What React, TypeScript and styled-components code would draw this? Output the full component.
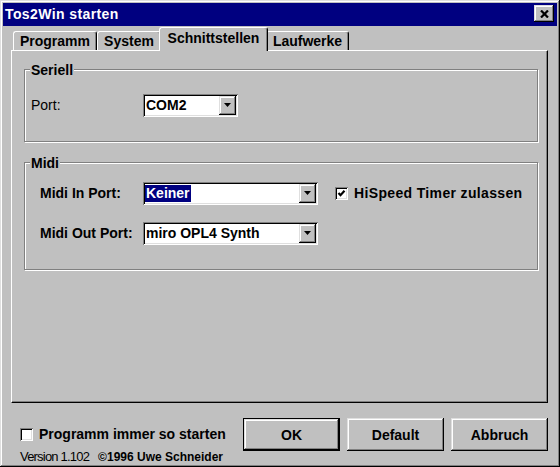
import styled, { createGlobalStyle } from 'styled-components';

const GlobalStyle = createGlobalStyle`
  html, body {
    margin: 0;
    padding: 0;
    background: #c0c0c0;
  }
  body {
    font-family: "Liberation Sans", Arial, sans-serif;
    color: #000;
  }
`;

const raised = `
  box-shadow: inset -1px -1px #000, inset 1px 1px #dfdfdf, inset -2px -2px #808080, inset 2px 2px #fff;
`;

const sunken = `
  box-shadow: inset 1px 1px #808080, inset -1px -1px #fff, inset 2px 2px #000, inset -2px -2px #dfdfdf;
`;

const Window = styled.div`
  width: 560px;
  height: 467px;
  box-sizing: border-box;
  padding: 3px;
  background: #c0c0c0;
  ${raised}
  display: flex;
  flex-direction: column;
`;

const TitleBar = styled.div`
  height: 23px;
  background: #000080;
  display: flex;
  justify-content: space-between;
  align-items: center;
  padding: 0 3px 0 2px;
`;

const Title = styled.span`
  color: #fff;
  font-weight: bold;
  font-size: 14px;
  letter-spacing: 0.4px;
  line-height: 16px;
`;

const CloseButton = styled.div`
  width: 20px;
  height: 17px;
  box-sizing: border-box;
  align-self: flex-start;
  margin-top: 2px;
  background: #c0c0c0;
  ${raised}
  display: flex;
  align-items: center;
  justify-content: center;
  padding-top: 1px;
`;

const TabStrip = styled.div`
  height: 23px;
  margin-top: 1px;
  padding-left: 10px;
  display: flex;
  align-items: flex-end;
`;

const Tab = styled.div<{ $active?: boolean; $width: number }>`
  box-sizing: border-box;
  width: ${p => p.$width}px;
  height: ${p => (p.$active ? 24 : 19)}px;
  padding-top: ${p => (p.$active ? 2 : 1)}px;
  margin: 0 ${p => (p.$active ? -2 : 0)}px ${p => (p.$active ? -1 : 0)}px;
  position: relative;
  z-index: ${p => (p.$active ? 1 : 0)};
  background: #c0c0c0;
  border-top: 1px solid #fff;
  border-left: 1px solid #fff;
  border-right: 1px solid #000;
  border-radius: 3px 3px 0 0;
  box-shadow: inset -1px 0 #808080;
  font-weight: bold;
  font-size: 14px;
  line-height: 17px;
  text-align: center;
  white-space: nowrap;
`;

const Panel = styled.div`
  height: 354px;
  box-sizing: border-box;
  margin: 0 9px 0 8px;
  padding: 11px 9px 0 12px;
  border-top: 1px solid #fff;
  border-left: 1px solid #fff;
  border-right: 1px solid #000;
  border-bottom: 1px solid #000;
  box-shadow: inset -1px -1px #808080;
`;

const Group = styled.fieldset<{ $top: number }>`
  margin: 0;
  min-width: 0;
  padding: ${p => p.$top}px 0 24px;
  border: 1px solid #808080;
  box-shadow: inset 1px 1px #fff, 1px 1px #fff;
  display: flex;
  flex-direction: column;
  gap: 17px;

  & + & {
    margin-top: 13px;
  }
`;

const Legend = styled.legend`
  margin-left: 5px;
  padding: 0 1px;
  background: #c0c0c0;
  font-weight: bold;
  font-size: 14px;
  line-height: 16px;
`;

const Row = styled.div<{ $indent: number }>`
  display: flex;
  align-items: center;
  padding-left: ${p => p.$indent}px;
`;

const Label = styled.span<{ $width: number; $bold?: boolean }>`
  width: ${p => p.$width}px;
  font-size: 14px;
  font-weight: ${p => (p.$bold ? 'bold' : 'normal')};
  line-height: 17px;
`;

const Combo = styled.div<{ $width: number }>`
  width: ${p => p.$width}px;
  height: 23px;
  box-sizing: border-box;
  padding: 2px;
  background: #fff;
  ${sunken}
  display: flex;
  align-items: center;
`;

const ComboText = styled.div`
  flex: 1;
  display: flex;
  align-items: center;
`;

const ComboValue = styled.span<{ $selected?: boolean }>`
  height: 17px;
  padding: 0 1px;
  font-size: 14px;
  font-weight: bold;
  line-height: 17px;
  white-space: nowrap;
  background: ${p => (p.$selected ? '#000080' : 'transparent')};
  color: ${p => (p.$selected ? '#fff' : '#000')};
`;

const DropButton = styled.div`
  width: 17px;
  height: 19px;
  box-sizing: border-box;
  background: #c0c0c0;
  ${raised}
  display: flex;
  align-items: center;
  justify-content: center;
`;

const CheckLabel = styled.label<{ $spacing?: number }>`
  display: flex;
  align-items: center;
  gap: 6px;
  font-size: 14px;
  font-weight: bold;
  line-height: 17px;
  letter-spacing: ${p => p.$spacing ?? 0}px;
  white-space: nowrap;
`;

const CheckBox = styled.span`
  width: 13px;
  height: 13px;
  box-sizing: border-box;
  background: #fff;
  ${sunken}
  display: flex;
  align-items: center;
  justify-content: center;
`;

const Footer = styled.div`
  padding: 15px 9px 0 17px;
  display: flex;
  flex-direction: column;
`;

const FooterRow = styled.div`
  display: flex;
  align-items: center;
`;

const Spacer = styled.div<{ $size?: number }>`
  flex: ${p => (p.$size ? `0 0 ${p.$size}px` : '1')};
`;

const ButtonGroup = styled.div`
  display: flex;
  gap: 7px;
`;

const Button = styled.button<{ $default?: boolean }>`
  width: 97px;
  height: 33px;
  box-sizing: border-box;
  margin: 0;
  padding: 0;
  background: #c0c0c0;
  border: ${p => (p.$default ? '1px solid #000' : 'none')};
  ${raised}
  font-family: inherit;
  font-size: 14px;
  font-weight: bold;
  color: #000;
`;

const VersionRow = styled.div`
  display: flex;
  align-items: baseline;
  gap: 9px;
  margin-top: -1px;
  line-height: 13px;
`;

const Version = styled.span`
  font-size: 13px;
  letter-spacing: -0.8px;
`;

const Copyright = styled.span`
  font-size: 12px;
  font-weight: bold;
`;

const Arrow = () => (
  <svg width="7" height="4" viewBox="0 0 7 4">
    <polygon points="0,0 7,0 3.5,4" fill="#000" />
  </svg>
);

const Check = () => (
  <svg width="9" height="9" viewBox="0 0 9 9">
    <path d="M1.5 4 L3.5 6.2 L7.5 1.8" fill="none" stroke="#000" strokeWidth="2.2" />
  </svg>
);

function ComboBox({ width, value, selected }: { width: number; value: string; selected?: boolean }) {
  return (
    <Combo $width={width}>
      <ComboText>
        <ComboValue $selected={selected}>{value}</ComboValue>
      </ComboText>
      <DropButton>
        <Arrow />
      </DropButton>
    </Combo>
  );
}

const tabs = [
  { label: 'Programm', width: 84 },
  { label: 'System', width: 64 },
  { label: 'Schnittstellen', width: 109, active: true },
  { label: 'Laufwerke', width: 83 },
];

export default function App() {
  return (
    <>
      <GlobalStyle />
      <Window>
        <TitleBar>
          <Title>Tos2Win starten</Title>
          <CloseButton>
            <svg width="9" height="8" viewBox="0 0 9 8">
              <path d="M1 0.5 L8 7.5 M8 0.5 L1 7.5" stroke="#000" strokeWidth="2.2" />
            </svg>
          </CloseButton>
        </TitleBar>

        <TabStrip>
          {tabs.map(t => (
            <Tab key={t.label} $width={t.width} $active={t.active}>
              {t.label}
            </Tab>
          ))}
        </TabStrip>

        <Panel>
          <Group $top={16}>
            <Legend>Seriell</Legend>
            <Row $indent={6}>
              <Label $width={112}>Port:</Label>
              <ComboBox width={95} value="COM2" />
            </Row>
          </Group>

          <Group $top={11}>
            <Legend>Midi</Legend>
            <Row $indent={15}>
              <Label $width={103} $bold>
                Midi In Port:
              </Label>
              <ComboBox width={175} value="Keiner" selected />
              <Spacer $size={17} />
              <CheckLabel $spacing={0.35}>
                <CheckBox>
                  <Check />
                </CheckBox>
                HiSpeed Timer zulassen
              </CheckLabel>
            </Row>
            <Row $indent={15}>
              <Label $width={103} $bold>
                Midi Out Port:
              </Label>
              <ComboBox width={175} value="miro OPL4 Synth" />
            </Row>
          </Group>
        </Panel>

        <Footer>
          <FooterRow>
            <CheckLabel>
              <CheckBox />
              Programm immer so starten
            </CheckLabel>
            <Spacer />
            <ButtonGroup>
              <Button $default>OK</Button>
              <Button>Default</Button>
              <Button>Abbruch</Button>
            </ButtonGroup>
          </FooterRow>
          <VersionRow>
            <Version>Version 1.102</Version>
            <Copyright>©1996 Uwe Schneider</Copyright>
          </VersionRow>
        </Footer>
      </Window>
    </>
  );
}
